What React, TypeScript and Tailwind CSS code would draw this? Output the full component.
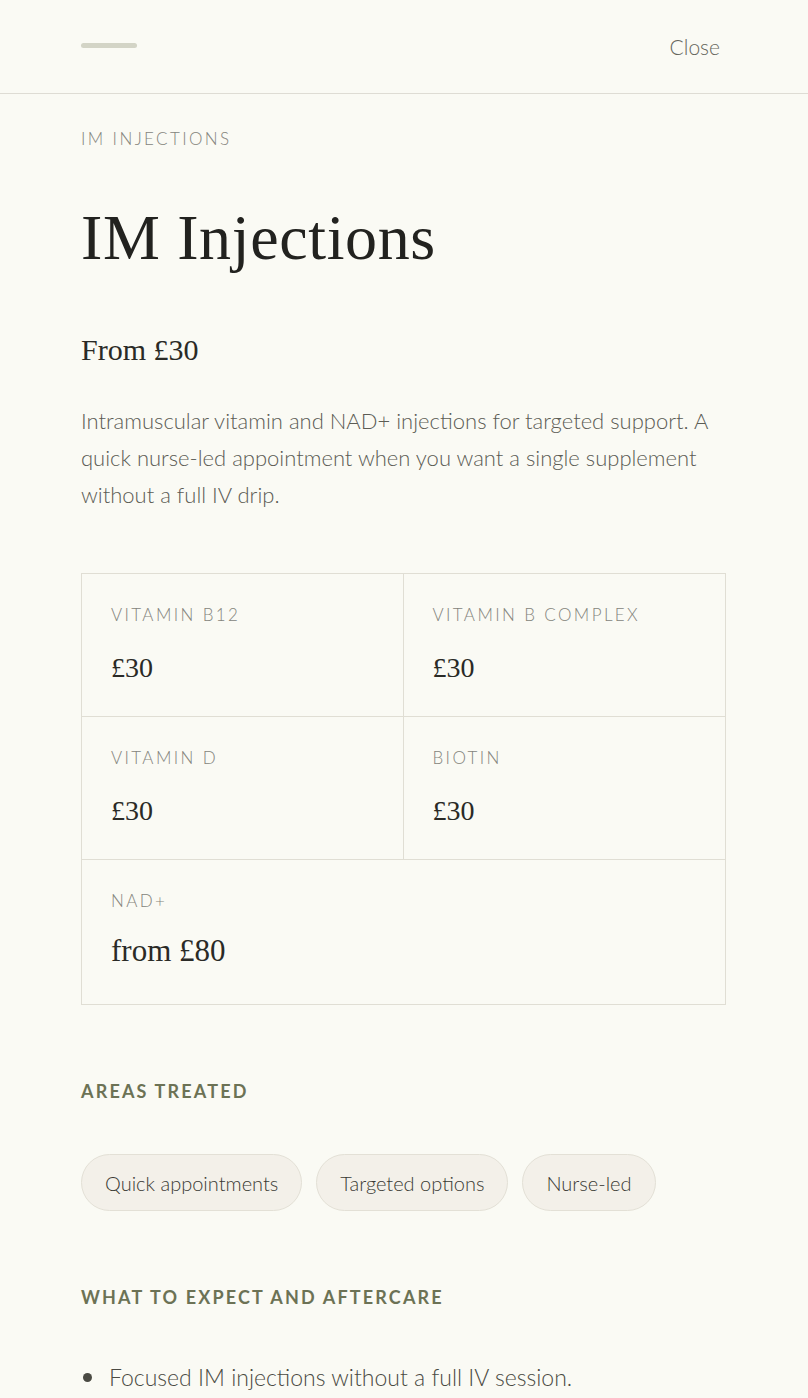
import React from "react";

const sans = { fontFamily: "Lato, 'Open Sans', sans-serif" };
const serif = { fontFamily: "'Liberation Serif', 'DejaVu Serif', serif" };

function Cell({ label, price, big }: { label: string; price: string; big?: boolean }) {
  return (
    <div className={`px-[29px] pt-[30px] ${big ? "pb-[33px]" : "pb-[28px]"}`}>
      <div className="text-[17px] tracking-[0.14em] text-[#84847c] font-light leading-[22px]" style={sans}>
        {label}
      </div>
      <div className={`${big ? "text-[31px] mt-[19px]" : "text-[28px] mt-[22px]"} text-[#2a2a26] leading-[40px]`} style={serif}>
        {price}
      </div>
    </div>
  );
}

export default function App() {
  return (
    <div className="min-h-[1398px] bg-[#fafaf4] text-[#2a2a26]" style={sans}>
      <header className="h-[94px] flex items-center justify-between pl-[81px] pr-[88px] border-b border-[#dedcd4]">
        <div className="w-[56px] h-[5px] rounded-full bg-[#d3d4c6] -mt-[2px]" />
        <div className="text-[21px] text-[#66665c] font-light">Close</div>
      </header>
      <main className="px-[81px] pr-[82px]">
        <div className="mt-[33px] text-[17px] tracking-[0.14em] text-[#84847c] font-light leading-[24px]">IM INJECTIONS</div>
        <h1 className="mt-[49px] text-[64px] leading-[76px] text-[#22221f] tracking-[0.01em]" style={serif}>
          IM Injections
        </h1>
        <div className="mt-[54px] text-[30px] leading-[40px] text-[#2a2a26]" style={serif}>
          From £30
        </div>
        <p className="mt-[32px] text-[22px] leading-[37px] text-[#5c5c54] font-light">
          Intramuscular vitamin and NAD+ injections for targeted support. A quick nurse-led appointment when you want a single supplement without a full IV drip.
        </p>
        <div className="mt-[60px] grid grid-cols-2 border border-[#e0ded4]">
          <div className="border-r border-b border-[#e0ded4]"><Cell label="VITAMIN B12" price="£30" /></div>
          <div className="border-b border-[#e0ded4]"><Cell label="VITAMIN B COMPLEX" price="£30" /></div>
          <div className="border-r border-b border-[#e0ded4]"><Cell label="VITAMIN D" price="£30" /></div>
          <div className="border-b border-[#e0ded4]"><Cell label="BIOTIN" price="£30" /></div>
          <div className="col-span-2"><Cell label="NAD+" price="from £80" big /></div>
        </div>
        <h2 className="mt-[74px] text-[18px] font-bold tracking-[0.12em] text-[#6c7255] leading-[24px]">AREAS TREATED</h2>
        <div className="mt-[51px] flex flex-wrap gap-[14px]">
          {["Quick appointments", "Targeted options", "Nurse-led"].map((t) => (
            <span key={t} className="h-[57px] px-[23px] flex items-center rounded-full bg-[#f3f0e9] border border-[#e3e0d6] text-[20px] text-[#3a3a34] font-light">
              {t}
            </span>
          ))}
        </div>
        <h2 className="mt-[74px] text-[18px] font-bold tracking-[0.12em] text-[#6c7255] leading-[24px]">WHAT TO EXPECT AND AFTERCARE</h2>
        <ul className="mt-[52px]">
          <li className="flex items-center gap-[17px] text-[23px] text-[#4a4a43] font-light leading-[32px]">
            <span className="w-[9px] h-[9px] rounded-full bg-[#4a4a43] ml-[2px]" />
            Focused IM injections without a full IV session.
          </li>
        </ul>
      </main>
    </div>
  );
}
